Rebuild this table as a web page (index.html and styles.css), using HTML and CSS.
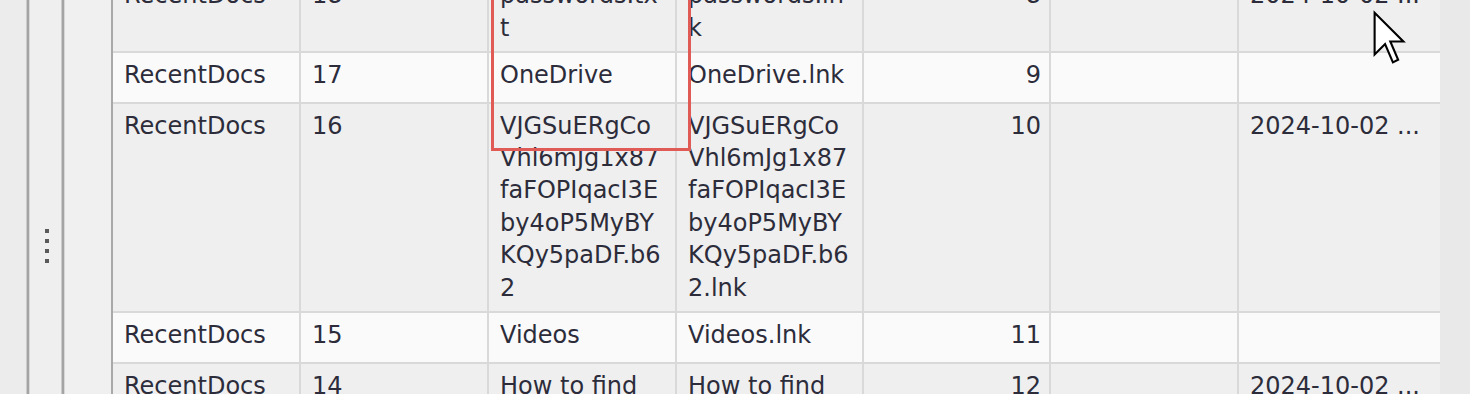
FILE: index.html
```html
<!DOCTYPE html>
<html lang="en">
<head>
<meta charset="utf-8">
<title>RecentDocs</title>
<link rel="stylesheet" href="styles.css">
</head>
<body>
<div class="app">
  <div class="strip"></div>
  <div class="sep"></div>
  <div class="grip"><span></span><span></span><span></span><span></span></div>
  <div class="sep"></div>
  <div class="gutter"></div>
  <div class="grid-view">
    <div class="rows">
      <div class="row">
        <div class="cell">RecentDocs</div>
        <div class="cell">18</div>
        <div class="cell">passwords.tx<br>t</div>
        <div class="cell">passwords.ln<br>k</div>
        <div class="cell num">8</div>
        <div class="cell"></div>
        <div class="cell">2024-10-02 ...</div>
      </div>
      <div class="row light">
        <div class="cell">RecentDocs</div>
        <div class="cell">17</div>
        <div class="cell">OneDrive</div>
        <div class="cell">OneDrive.lnk</div>
        <div class="cell num">9</div>
        <div class="cell"></div>
        <div class="cell"></div>
      </div>
      <div class="row">
        <div class="cell">RecentDocs</div>
        <div class="cell">16</div>
        <div class="cell">VJGSuERgCo<br>Vhl6mJg1x87<br>faFOPIqacI3E<br>by4oP5MyBY<br>KQy5paDF.b6<br>2</div>
        <div class="cell">VJGSuERgCo<br>Vhl6mJg1x87<br>faFOPIqacI3E<br>by4oP5MyBY<br>KQy5paDF.b6<br>2.lnk</div>
        <div class="cell num">10</div>
        <div class="cell"></div>
        <div class="cell">2024-10-02 ...</div>
      </div>
      <div class="row light">
        <div class="cell">RecentDocs</div>
        <div class="cell">15</div>
        <div class="cell">Videos</div>
        <div class="cell">Videos.lnk</div>
        <div class="cell num">11</div>
        <div class="cell"></div>
        <div class="cell"></div>
      </div>
      <div class="row">
        <div class="cell">RecentDocs</div>
        <div class="cell">14</div>
        <div class="cell">How to find</div>
        <div class="cell">How to find</div>
        <div class="cell num">12</div>
        <div class="cell"></div>
        <div class="cell">2024-10-02 ...</div>
      </div>
    </div>
    <div class="highlight"></div>
    <svg class="cursor" viewBox="0 0 13 21" width="34" height="55" aria-hidden="true">
      <path d="M1 1 L1 17 L5 13 L8 20 L10 19 L7 12 L12 12 Z" fill="#ffffff" stroke="#000000" stroke-width="0.8" stroke-linejoin="miter"/>
    </svg>
  </div>
  <div class="side"></div>
</div>
</body>
</html>
```
FILE: styles.css
```css
html, body {
  margin: 0;
  padding: 0;
}
body {
  width: 1470px;
  height: 394px;
  overflow: hidden;
  background: #f0f0f0;
  font-family: "DejaVu Sans", "Noto Sans", sans-serif;
}
.app {
  display: flex;
  height: 394px;
}
.strip {
  flex: 0 0 26px;
  background: #ececec;
}
.sep {
  flex: 0 0 2px;
  background: #a4a4a4;
  border-left: 1px solid #cbcbcb;
  border-right: 1px solid #d7d7d7;
}
.grip {
  flex: 0 0 31px;
  box-sizing: border-box;
  background: #efefef;
  display: flex;
  flex-direction: column;
  align-items: center;
  gap: 6px;
  padding-top: 229px;
  padding-left: 2px;
}
.grip span {
  width: 4px;
  height: 4px;
  background: #5a5a5a;
}
.gutter {
  flex: 0 0 46px;
  background: #f0f0f0;
}
.grid-view {
  flex: 0 0 1327px;
  position: relative;
  overflow: hidden;
  border-left: 2px solid #a9a9a9;
}
.side {
  flex: 0 0 30px;
  background: #e9e9e9;
}
.rows {
  display: grid;
  grid-template-columns: 188px 188px 188px 187px 187px 188px 240px;
  margin-top: -26.4px;
  color: #2c2c3a;
  font-size: 24px;
  line-height: 32.4px;
}
.row {
  display: contents;
}
.cell {
  box-sizing: border-box;
  min-height: 51px;
  padding: 5.5px 10px 7.1px 11px;
  border-right: 2px solid #d9d9d9;
  border-bottom: 2px solid #d9d9d9;
  background: #efefef;
  white-space: nowrap;
  overflow: hidden;
}
.row.light > .cell {
  background: #fafafa;
}
.cell.num {
  text-align: right;
  padding-right: 8px;
}
.highlight {
  position: absolute;
  left: 378px;
  top: -10px;
  width: 200px;
  height: 161px;
  box-sizing: border-box;
  border: 3px solid #e15b56;
}
.cursor {
  position: absolute;
  left: 1259px;
  top: 10px;
}
```
